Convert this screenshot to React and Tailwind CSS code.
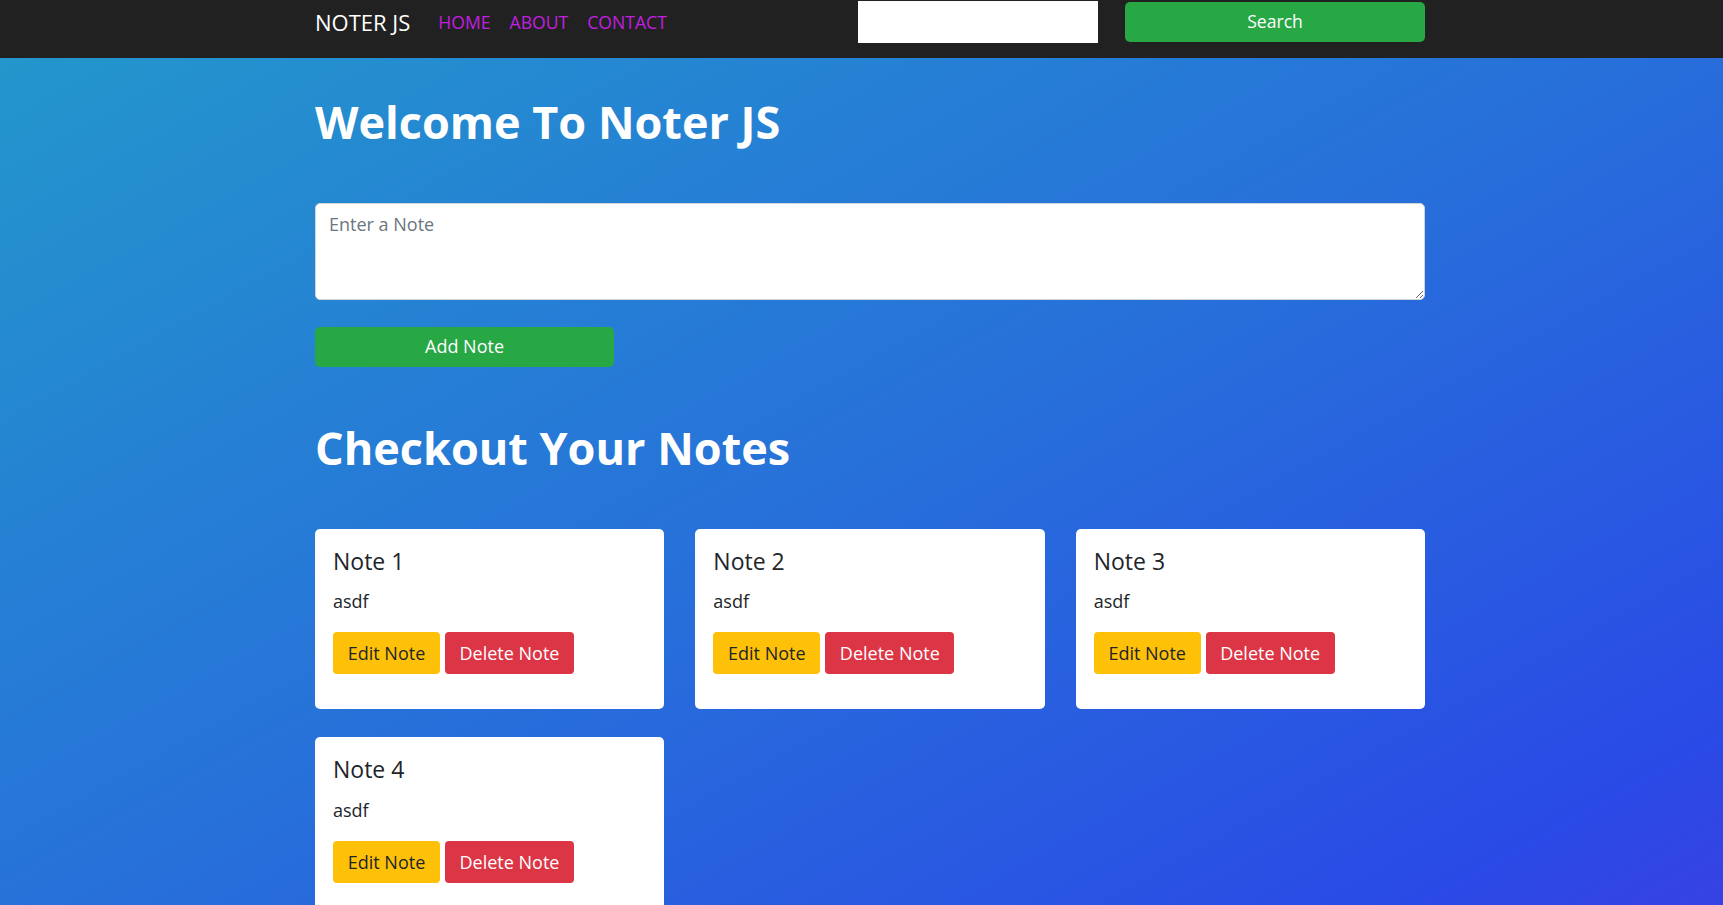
import React, { useState } from 'react';

const notes = [
  { id: 1, title: 'Note 1', text: 'asdf' },
  { id: 2, title: 'Note 2', text: 'asdf' },
  { id: 3, title: 'Note 3', text: 'asdf' },
  { id: 4, title: 'Note 4', text: 'asdf' },
];

const NoteCard = ({ note }) => (
  <div className="bg-white rounded-[5px] pt-[19px] px-[18px] pb-[35px]">
    <h5 className="text-[23px] font-medium leading-[26.4px] text-[#212529] mb-[14px]">{note.title}</h5>
    <p className="text-[18px] leading-[26.4px] text-[#212529] mb-[18px]">{note.text}</p>
    <div className="flex gap-[5px]">
      <button className="w-[107px] h-[42px] rounded-[4px] bg-[#ffc107] text-[#212529] text-[18px]">
        Edit Note
      </button>
      <button className="w-[129px] h-[42px] rounded-[4px] bg-[#dc3545] text-white text-[18px]">
        Delete Note
      </button>
    </div>
  </div>
);

export default function App() {
  const [note, setNote] = useState('');

  return (
    <div
      className="min-h-screen w-full flex flex-col bg-[linear-gradient(to_bottom_right,#2399cb_0%,#2770da_50%,#2a4ae6_88%,#3a40e0_100%)]"
      style={{ fontFamily: '"Open Sans", "Noto Sans", Arial, sans-serif' }}
    >
      {/* Navbar */}
      <nav className="w-full h-[58px] bg-[#212121] shrink-0">
        <div className="ml-[315px] w-[1110px] h-[43px] flex items-center">
          <a className="text-white text-[22px] leading-[33px] pt-[2px]">NOTER JS</a>
          <div className="flex items-center gap-[19px] ml-[28px] pt-[1px]">
            <a className="text-[#c21fe0] text-[17.6px] leading-[26.4px]">HOME</a>
            <a className="text-[#c21fe0] text-[17.6px] leading-[26.4px]">ABOUT</a>
            <a className="text-[#c21fe0] text-[17.6px] leading-[26.4px]">CONTACT</a>
          </div>
          <div className="ml-auto flex items-center gap-[27px]">
            <input className="w-[240px] h-[42px] bg-white outline-none self-start mt-[1px]" />
            <button className="w-[300px] h-[40px] rounded-[5px] bg-[#28a745] text-white text-[17.6px]">
              Search
            </button>
          </div>
        </div>
      </nav>

      {/* Main */}
      <main className="ml-[315px] w-[1110px] pb-10">
        <h1 className="mt-[38px] text-white font-bold text-[45px] leading-[52.8px]">Welcome To Noter JS</h1>

        <textarea
          value={note}
          onChange={(e) => setNote(e.target.value)}
          placeholder="Enter a Note"
          className="mt-[54px] block w-full h-[97px] bg-white rounded-[5px] border border-[#ced4da] px-[13px] py-[7px] text-[18px] leading-[26.4px] text-[#495057] placeholder-[#6c757d] outline-none"
        />

        <button className="mt-[27px] w-[299px] h-[40px] rounded-[5px] bg-[#28a745] text-white text-[18px]">
          Add Note
        </button>

        <h1 className="mt-[55px] text-white font-bold text-[45px] leading-[52.8px]">Checkout Your Notes</h1>

        <div className="mt-[54px] grid grid-cols-3 gap-x-[31px] gap-y-[28px]">
          {notes.map((n) => (
            <NoteCard key={n.id} note={n} />
          ))}
        </div>
      </main>
    </div>
  );
}
